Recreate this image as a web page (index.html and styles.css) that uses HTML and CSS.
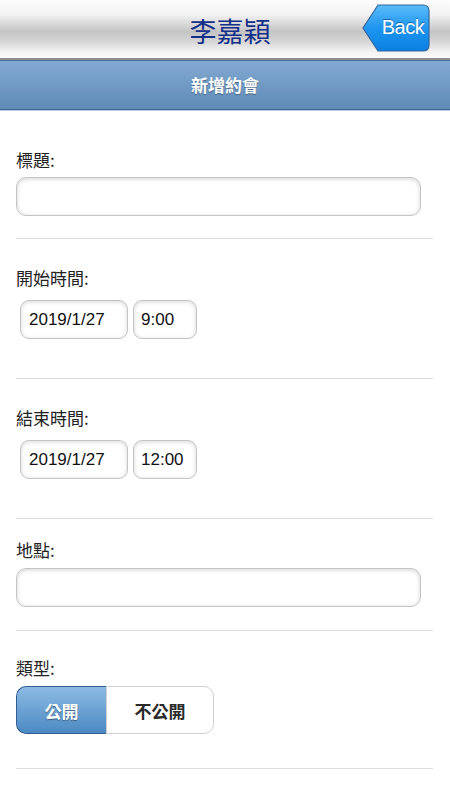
FILE: index.html
```html
<!DOCTYPE html>
<html lang="zh-Hant">
<head>
  <meta charset="UTF-8" />
  <meta name="viewport" content="width=device-width, initial-scale=1.0" />
  <title>新增約會</title>
  <link rel="stylesheet" href="styles.css">
</head>
<body>
  <header class="topbar">
    <h1 class="topbar-title">李嘉穎</h1>
    <a class="back-btn" href="#">
      <svg width="68" height="48" viewBox="0 0 68 48">
        <defs>
          <linearGradient id="backGrad" x1="0" y1="0" x2="0" y2="1">
            <stop offset="0" stop-color="#5cbcf8" />
            <stop offset="0.5" stop-color="#1e95f0" />
            <stop offset="1" stop-color="#0a7fe2" />
          </linearGradient>
        </defs>
        <path d="M16 1 H61 Q67 1 67 7 V41 Q67 47 61 47 H16 L1 24 Z" fill="url(#backGrad)" stroke="#35679b" stroke-width="1.2" />
      </svg>
      <span class="back-label">Back</span>
    </a>
  </header>

  <div class="subbar">新增約會</div>

  <form class="appt-form">
    <div class="field field-title">
      <label for="title">標題:</label>
      <input type="text" id="title" class="text-input" />
    </div>

    <div class="field field-time">
      <label>開始時間:</label>
      <div class="time-row">
        <input type="text" class="date-input" value="2019/1/27" />
        <input type="text" class="clock-input" value="9:00" />
      </div>
    </div>

    <div class="field field-time">
      <label>結束時間:</label>
      <div class="time-row">
        <input type="text" class="date-input" value="2019/1/27" />
        <input type="text" class="clock-input" value="12:00" />
      </div>
    </div>

    <div class="field field-place">
      <label for="place">地點:</label>
      <input type="text" id="place" class="text-input" />
    </div>

    <div class="field field-type">
      <label>類型:</label>
      <div class="segment">
        <button type="button" class="seg-btn seg-on">公開</button>
        <button type="button" class="seg-btn">不公開</button>
      </div>
    </div>

    <div class="field field-last">
      <label>負責人員:</label>
    </div>
  </form>
</body>
</html>
```

FILE: styles.css
```css
body {
  margin: 0;
  background: #fff;
  font-family: "Noto Sans CJK TC", "Liberation Sans", sans-serif;
  color: #222;
  overflow: hidden;
}

.topbar {
  position: relative;
  height: 58px;
  border-bottom: 2px solid #8f8f8f;
  background: linear-gradient(to bottom, #fdfdfd 0%, #f2f2f2 25%, #c4c4c4 55%, #d6d6d6 72%, #f4f4f4 90%, #fafafa 100%);
}
.topbar-title {
  margin: 0;
  text-align: center;
  font-size: 27px;
  font-weight: normal;
  line-height: 62px;
  color: #142f88;
  padding-left: 10px;
}
.back-btn {
  position: absolute;
  left: 362px;
  top: 4px;
  width: 68px;
  height: 48px;
  text-decoration: none;
}
.back-btn svg {
  display: block;
}
.back-label {
  position: absolute;
  left: 14px;
  right: 0;
  top: 0;
  line-height: 46px;
  text-align: center;
  font-family: "Liberation Sans", sans-serif;
  font-size: 20px;
  color: #fff;
  letter-spacing: -0.5px;
  text-shadow: 0 -1px 0 rgba(0,40,100,0.5);
}

.subbar {
  height: 48px;
  line-height: 48px;
  border-top: 1px solid #4d6f96;
  border-bottom: 1px solid #3b679a;
  box-shadow: 0 1px 0 #b9cde2;
  background: linear-gradient(to bottom, #82a9d1, #5f8bb8);
  text-align: center;
  color: #fff;
  font-size: 17px;
  font-weight: bold;
  text-shadow: 0 1px 1px rgba(0,0,0,0.35);
}

.appt-form {
  padding: 0 17px 0 16px;
}
.field {
  border-bottom: 1px solid #dcdcdc;
}
.field label {
  display: block;
  height: 20px;
  line-height: 20px;
  font-size: 17px;
  color: #222;
}

.text-input {
  display: block;
  box-sizing: border-box;
  width: 405px;
  height: 39px;
  border: 1px solid #c4c4c4;
  border-radius: 10px;
  box-shadow: inset 0 1px 4px rgba(0,0,0,0.18);
  background: #fff;
  outline: none;
}

.field-title { padding: 40px 0 22px; }
.field-title .text-input { margin-top: 7px; }

.field-time { padding: 29px 0 39px; }
.time-row {
  display: flex;
  gap: 5px;
  margin: 12px 0 0 4px;
}
.date-input,
.clock-input {
  box-sizing: border-box;
  height: 39px;
  padding: 0 0 0 8px;
  border: 1px solid #c4c4c4;
  border-radius: 9px;
  box-shadow: inset 0 1px 4px rgba(0,0,0,0.16);
  background: #fff;
  font-family: "Liberation Sans", sans-serif;
  font-size: 17px;
  color: #111;
  outline: none;
}
.date-input { width: 108px; }
.clock-input { width: 64px; padding-left: 7px; }

.field-place { padding: 21px 0 23px; }
.field-place .text-input { margin-top: 8px; }

.field-type { padding: 27px 0 34px; }
.segment {
  display: flex;
  margin-top: 8px;
  width: 198px;
  height: 48px;
}
.seg-btn {
  margin: 0;
  font-family: "Noto Sans CJK TC", sans-serif;
  font-size: 17px;
  font-weight: bold;
  cursor: pointer;
}
.seg-btn.seg-on {
  width: 90px;
  border: 1px solid #2f5f92;
  border-right: none;
  border-radius: 10px 0 0 10px;
  background: linear-gradient(to bottom, #8cbbe3, #4c89c2);
  color: #fff;
  text-shadow: 0 1px 1px rgba(0,0,0,0.4);
}
.seg-btn:not(.seg-on) {
  width: 108px;
  border: 1px solid #cfcfcf;
  border-radius: 0 10px 10px 0;
  background: #fff;
  color: #2a2a2a;
}

.field-last {
  padding-top: 29px;
  border-bottom: none;
}
```
